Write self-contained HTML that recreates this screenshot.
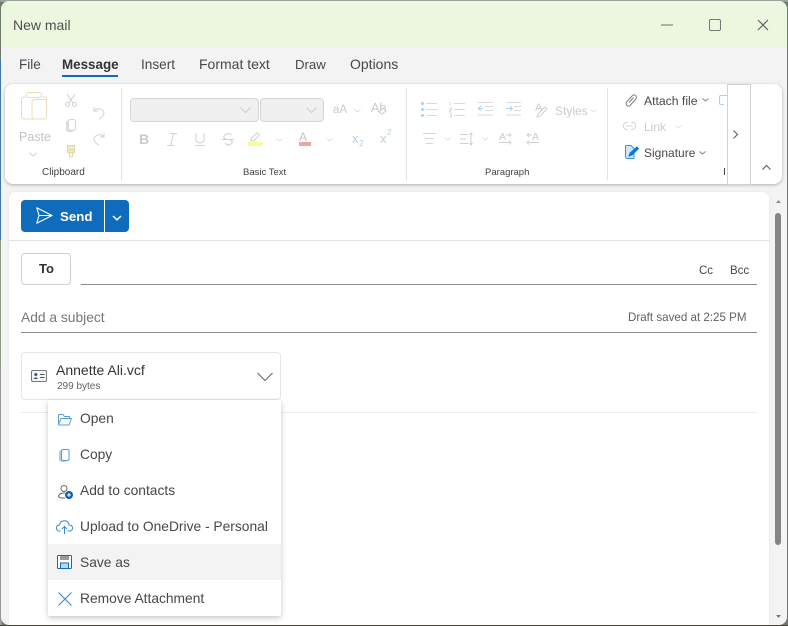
<!DOCTYPE html>
<html><head><meta charset="utf-8">
<style>
html,body{margin:0;padding:0;width:788px;height:626px;overflow:hidden;background:#6b7a6a;font-family:"Liberation Sans",sans-serif;}
#w{position:absolute;left:1px;top:1px;width:786px;height:624px;background:#f3f3f3;border-radius:8px;overflow:hidden;}
.a{position:absolute;}
.t{position:absolute;white-space:nowrap;line-height:16px;color:#484848;font-size:14px;}
svg{position:absolute;overflow:visible;fill:none;}
</style></head><body>
<div class="a" style="left:0;top:0;width:788px;height:2px;background:#9aa3a3"></div>
<div class="a" style="left:0;top:60px;width:2px;height:180px;background:#3f78a8"></div>
<div class="a" style="left:0;top:240px;width:2px;height:130px;background:#8a9a80"></div>
<div class="a" style="left:0;top:370px;width:2px;height:256px;background:#9a9a9a"></div>
<div class="a" style="left:0;top:625px;width:788px;height:1px;background:#4a4238"></div>
<div id="w"></div>
<div class="a" style="left:1px;top:1px;width:786px;height:47px;background:#edf7e0;border-radius:8px 8px 0 0"></div>
<div class="t" style="left:13px;top:17px;color:#505050">New mail</div>
<div class="a" style="left:661px;top:24px;width:12px;height:2px;background:#b0b2aa"></div>
<div class="a" style="left:709px;top:19px;width:10px;height:10px;border:1px solid #777;border-radius:2px"></div>
<svg style="left:758px;top:20px" width="10" height="10"><path d="M0 0L10 10M10 0L0 10" stroke="#555" stroke-width="1"/></svg>

<div class="t" style="left:19px;top:57px;font-size:13.5px">File</div>
<div class="t" style="left:62px;top:57px;font-weight:bold;color:#333;font-size:13.4px">Message</div>
<div class="a" style="left:62px;top:75px;width:56px;height:2px;background:#0f6cbd"></div>
<div class="t" style="left:141px;top:57px;font-size:13.6px">Insert</div>
<div class="t" style="left:199px;top:56px">Format text</div>
<div class="t" style="left:295px;top:57px;font-size:13.2px">Draw</div>
<div class="t" style="left:350px;top:56px">Options</div>

<!-- ribbon -->
<div class="a" style="left:5px;top:84px;width:777px;height:100px;background:#fff;border-radius:8px;box-shadow:0 1px 3px rgba(0,0,0,.28)"></div>
<div class="a" style="left:121px;top:88px;width:1px;height:92px;background:#e3e3e3"></div>
<div class="a" style="left:406px;top:88px;width:1px;height:92px;background:#e3e3e3"></div>
<div class="a" style="left:607px;top:88px;width:1px;height:92px;background:#e3e3e3"></div>

<!-- clipboard -->
<svg style="left:21px;top:92px" width="26" height="28"><path d="M5 5H3.5Q.5 5 .5 8V24Q.5 27 3.5 27H23Q25.500 27 25.500 24V8Q25.500 5 23 5H21" stroke="#e9dcbc" stroke-width="1"/><rect x="5.500" y=".5" width="15" height="5" rx="2" stroke="#e9dcbc" fill="#fff"/><rect x="11" y="7.500" width="14.500" height="19.500" rx="2.500" stroke="#e9dcbc" fill="#fff"/></svg>
<div class="t" style="left:19px;top:129px;font-size:12.5px;color:#c4c4c4">Paste</div>
<svg style="left:29px;top:152px" width="8" height="5"><path d="M.5.5L4 4L7.500.5" stroke="#d2d2d2"/></svg>
<div class="t" style="left:42px;top:165px;font-size:10px;color:#424242">Clipboard</div>
<svg style="left:65px;top:94px" width="12" height="13"><path d="M2 0L8 9M10 0L4 9" stroke="#cfcfcf"/><circle cx="2.500" cy="10.500" r="2" stroke="#cfcfcf"/><circle cx="9.500" cy="10.500" r="2" stroke="#cfcfcf"/></svg>
<svg style="left:66px;top:119px" width="10" height="13"><rect x=".5" y="2" width="7" height="10.500" rx="2" fill="#e2e2e2" stroke="#d6d6d6"/><rect x="2.500" y=".5" width="7" height="10.500" rx="1.500" fill="#fff" stroke="#d6d6d6"/></svg>
<svg style="left:93px;top:106px" width="12" height="13"><path d="M1 1V5H5M1 5C4 1 11 3 11 7C11 10 8 12 6 13" stroke="#d2d2d2"/></svg>
<svg style="left:93px;top:132px" width="12" height="13"><path d="M11 1V5H7M11 5C8 1 1 3 1 7C1 10 4 12 6 13" stroke="#d2d2d2"/></svg>
<svg style="left:67px;top:145px" width="8" height="13"><rect x=".5" y=".5" width="7" height="7" fill="#f3e8c8" stroke="#e6d5a6"/><path d="M.5 5H7.500M2.500 8V11.500Q4 13 5.500 11.500V8" stroke="#e6d5a6"/></svg>

<!-- basic text -->
<div class="a" style="left:130px;top:98px;width:127px;height:22px;background:#f0f0f0;border:1px solid #d6d6d6;border-radius:4px"></div>
<div class="a" style="left:260px;top:98px;width:62px;height:22px;background:#f0f0f0;border:1px solid #d6d6d6;border-radius:4px"></div>
<svg style="left:240px;top:107px" width="11" height="6"><path d="M.5.5L5.500 5.500L10.500.5" stroke="#cdcdcd"/></svg>
<svg style="left:306px;top:107px" width="11" height="6"><path d="M.5.5L5.500 5.500L10.500.5" stroke="#cdcdcd"/></svg>
<div class="t" style="left:333px;top:102px;font-size:11.5px;color:#cbcbcb">aA</div>
<svg style="left:354px;top:109px" width="7" height="4"><path d="M.5.5L3.500 3L6.500.5" stroke="#dedede"/></svg>
<div class="t" style="left:371px;top:100px;font-size:12.5px;color:#cbcbcb">Ab</div>
<svg style="left:378px;top:107px" width="8" height="8"><path d="M1 5L5 1L8 4L4 7Z" stroke="#cbcbcb" fill="#fff"/></svg>
<div class="t" style="left:139px;top:131px;font-size:14px;font-weight:bold;color:#cbcbcb">B</div>
<svg style="left:167px;top:133px" width="10" height="13"><path d="M3 .5H10M0 12.500H7M6.500.5L3.500 12.500" stroke="#d0d0d0"/></svg>
<svg style="left:195px;top:133px" width="10" height="13"><path d="M1 0V6.500Q1 10 5 10T9 6.500V0M0 12.500H10" stroke="#d0d0d0"/></svg>
<svg style="left:222px;top:133px" width="12" height="13"><path d="M0 6.500H12M9.500 2Q6 -1 3 2T4 6M3 10Q6 13.500 9 11T8 7" stroke="#d0d0d0"/></svg>
<svg style="left:248px;top:132px" width="15" height="14"><path d="M3 9L3.500 6L9 .8L11.500 3L6 8.500Z" stroke="#cfcfcf"/><rect y="10" width="14.500" height="4" fill="#fdf99b"/></svg>
<svg style="left:276px;top:138px" width="7" height="4"><path d="M.5.5L3.500 3L6.500.5" stroke="#e2e2e2"/></svg>
<div class="t" style="left:299px;top:129px;font-size:12px;color:#c6c6c6">A</div>
<div class="a" style="left:299px;top:142px;width:12px;height:4px;background:#eaa8a3"></div>
<svg style="left:326px;top:138px" width="7" height="4"><path d="M.5.5L3.500 3L6.500.5" stroke="#e2e2e2"/></svg>
<div class="t" style="left:352px;top:131px;font-size:13px;color:#cbcbcb">x</div>
<div class="t" style="left:359px;top:136px;font-size:8px;color:#a8d2f0">2</div>
<div class="t" style="left:380px;top:131px;font-size:13px;color:#cbcbcb">x</div>
<div class="t" style="left:387px;top:125px;font-size:8px;color:#a8d2f0">2</div>
<div class="t" style="left:243px;top:165px;font-size:9.5px;color:#424242">Basic Text</div>

<!-- paragraph -->
<svg style="left:421px;top:102px" width="16" height="15"><path d="M5 1.500H16M5 7.500H16M5 13.500H16" stroke="#dadada"/><circle cx="1.500" cy="1.500" r="1.500" fill="#a8d2f0"/><circle cx="1.500" cy="7.500" r="1.500" fill="#a8d2f0"/><circle cx="1.500" cy="13.500" r="1.500" fill="#a8d2f0"/></svg>
<svg style="left:449px;top:102px" width="16" height="15"><path d="M5 1.500H16M5 7.500H16M5 13.500H16" stroke="#dadada"/><path d="M1 0V3M.5 6H2.500V8H.5V10H2.500M.5 12H2.500V15H.5" stroke="#a8d2f0" stroke-width=".7"/></svg>
<svg style="left:478px;top:102px" width="15" height="15"><path d="M0 .5H15M7 4.500H15M7 8.500H15M0 13H15" stroke="#dadada"/><path d="M5 6.500H0M3 4L.5 6.500L3 9" stroke="#a8d2f0"/></svg>
<svg style="left:506px;top:102px" width="15" height="15"><path d="M0 .5H15M8 4.500H15M8 8.500H15M0 13H15" stroke="#dadada"/><path d="M0 6.500H6M4 4L6.500 6.500L4 9" stroke="#a8d2f0"/></svg>
<div class="t" style="left:535px;top:100px;font-size:11px;color:#cbcbcb">A</div>
<svg style="left:537px;top:106px" width="11" height="12"><path d="M0 11L1 8L8 1L10 3L3 10Z" stroke="#d0d0d0"/></svg>
<div class="t" style="left:555px;top:103px;font-size:12px;color:#cbcbcb">Styles</div>
<svg style="left:590px;top:109px" width="7" height="4"><path d="M.5.5L3.500 3L6.500.5" stroke="#e2e2e2"/></svg>
<svg style="left:423px;top:133px" width="13" height="11"><path d="M0 .5H13M2 5.500H11M3 10.500H10" stroke="#d6d6d6"/></svg>
<svg style="left:444px;top:137px" width="7" height="4"><path d="M.5.5L3.500 3L6.500.5" stroke="#e2e2e2"/></svg>
<svg style="left:460px;top:133px" width="13" height="12"><path d="M0 1.500H8M0 6H6M0 10.500H8M11 0V12M9.500 2L11 0L12.500 2M9.500 10L11 12L12.500 10" stroke="#d0d0d0"/></svg>
<svg style="left:482px;top:137px" width="7" height="4"><path d="M.5.5L3.500 3L6.500.5" stroke="#e2e2e2"/></svg>
<div class="t" style="left:499px;top:129px;font-size:10.500px;color:#cbcbcb">A</div>
<svg style="left:499px;top:132px" width="12" height="12"><path d="M7 3H12M10 1L12 3L10 5M0 10.500H12M10 8.500L12 10.500L10 12.500" stroke="#d0d0d0" stroke-width=".9"/></svg>
<div class="t" style="left:532px;top:129px;font-size:10.500px;color:#cbcbcb">A</div>
<svg style="left:527px;top:132px" width="12" height="12"><path d="M5 3H0M2 1L0 3L2 5M12 10.500H0M2 8.500L0 10.500L2 12.500" stroke="#d0d0d0" stroke-width=".9"/></svg>
<div class="t" style="left:485px;top:165px;font-size:9.5px;color:#424242">Paragraph</div>

<!-- insert -->
<svg style="left:625px;top:94px" width="12" height="13"><path d="M1.500 8L7.500 1.500Q9 .2 10.500 1.500T11 5L5 11.500Q3.500 12.800 2 11.500T1.500 8ZM4 8.500L8.500 3.500" stroke="#808080"/></svg>
<div class="t" style="left:644px;top:93px;font-size:12.2px">Attach file</div>
<svg style="left:702px;top:98px" width="7" height="4"><path d="M.5.5L3.500 3L6.500.5" stroke="#808080"/></svg>
<svg style="left:623px;top:122px" width="13" height="8"><path d="M5 .5H3.500Q.5.500.5 3.800T3.500 7.500H5M8 .5H9.500Q12.500.5 12.500 3.800T9.500 7.500H8M3.500 4H9.500" stroke="#d4d4d4"/></svg>
<div class="t" style="left:644px;top:119px;font-size:12px;color:#cbcbcb">Link</div>
<svg style="left:675px;top:125px" width="7" height="4"><path d="M.5.5L3.500 3L6.500.5" stroke="#e2e2e2"/></svg>
<svg style="left:625px;top:145px" width="14" height="14"><path d="M1 .5H6L9 3.500V13.500H2.500Q.5 13.500.5 11.500V1Z" fill="#cfe6f8" stroke="#3b93dc"/><path d="M4 11L5 8L12 2L13.500 3.500L7 10Z" fill="#0f78d4" stroke="#0f78d4"/></svg>
<div class="t" style="left:644px;top:145px;font-size:12px">Signature</div>
<svg style="left:699px;top:151px" width="7" height="4"><path d="M.5.5L3.500 3L6.500.5" stroke="#808080"/></svg>
<svg style="left:719px;top:95px" width="9" height="12"><path d="M9 .5H2Q.5.5.5 2V8Q.5 9.500 2 9.500H5" stroke="#a8d2f0"/></svg>
<div class="t" style="left:723px;top:164px;font-size:10.500px;color:#424242">I</div>
<div class="a" style="left:727px;top:84px;width:22px;height:99px;background:#fff;border:1px solid #d2d2d2;border-top-color:#d2d2d2"></div>
<svg style="left:733px;top:130px" width="5" height="9"><path d="M.5.5L4.500 4.500L.5 8.500" stroke="#555"/></svg>
<svg style="left:762px;top:165px" width="9" height="5"><path d="M.5 4.500L4.500.5L8.500 4.500" stroke="#555"/></svg>

<!-- main -->
<div class="a" style="left:9px;top:192px;width:760px;height:433px;background:#fff;border-radius:6px 6px 0 0;box-shadow:0 0 1px rgba(0,0,0,.15)"></div>
<div class="a" style="left:21px;top:200px;width:83px;height:32px;background:#0f6cbd;border-radius:4px 0 0 4px"></div>
<div class="a" style="left:105px;top:200px;width:24px;height:32px;background:#0f6cbd;border-radius:0 4px 4px 0"></div>
<svg style="left:36px;top:207px" width="17" height="17"><path d="M.8 .8L16 8.500L.8 16.200L3 8.500ZM3 8.500H16" stroke="#fff" stroke-width="1.100" stroke-linejoin="round"/></svg>
<div class="t" style="left:60px;top:209px;font-size:13.3px;font-weight:bold;color:#fff">Send</div>
<svg style="left:112px;top:215px" width="10" height="6"><path d="M1 1L5 4.800L9 1" stroke="#fff" stroke-width="1.500"/></svg>
<div class="a" style="left:9px;top:240px;width:760px;height:1px;background:#e2e2e2"></div>
<div class="a" style="left:21px;top:253px;width:48px;height:30px;background:#fff;border:1px solid #d1d1d1;border-radius:4px"></div>
<div class="t" style="left:39px;top:261px;font-size:13px;font-weight:bold;color:#333">To</div>
<div class="a" style="left:81px;top:284px;width:676px;height:1px;background:#8a8a8a"></div>
<div class="t" style="left:699px;top:263px;font-size:11.5px">Cc</div>
<div class="t" style="left:730px;top:263px;font-size:11.5px">Bcc</div>
<div class="t" style="left:21px;top:310px;color:#777;font-size:13.8px">Add a subject</div>
<div class="a" style="left:21px;top:332px;width:736px;height:1px;background:#8a8a8a"></div>
<div class="t" style="left:628px;top:310px;font-size:11.6px;color:#616161">Draft saved at 2:25 PM</div>

<div class="a" style="left:21px;top:352px;width:258px;height:46px;background:#fff;border:1px solid #e6e6e6;border-radius:4px"></div>
<svg style="left:31px;top:370px" width="16" height="13"><rect x=".5" y=".5" width="15" height="11" rx="1.500" fill="#f4f4f4" stroke="#777"/><circle cx="4.800" cy="4.500" r="1.500" fill="#34558c"/><path d="M2.500 9Q4.800 5.500 7 9Z" fill="#34558c"/><path d="M9 4.500H13.500M9 7.500H13.500" stroke="#555"/></svg>
<div class="t" style="left:56px;top:362px;color:#333;font-size:14px">Annette Ali.vcf</div>
<div class="t" style="left:57px;top:379px;font-size:10px;color:#616161">299 bytes</div>
<svg style="left:257px;top:372px" width="16" height="10"><path d="M.5 1L8 8.500L15.500 1" stroke="#666" stroke-width="1.100"/></svg>
<div class="a" style="left:21px;top:412px;width:736px;height:1px;background:#ececec"></div>

<!-- menu -->
<div class="a" style="left:48px;top:400px;width:233px;height:216px;background:#fff;box-shadow:0 2px 6px rgba(0,0,0,.22);border-radius:0 0 2px 2px"></div>
<div class="a" style="left:48px;top:544px;width:233px;height:36px;background:#f3f3f3"></div>
<div class="t" style="left:80px;top:411px;font-size:13.8px">Open</div>
<div class="t" style="left:80px;top:447px;font-size:13.8px">Copy</div>
<div class="t" style="left:80px;top:483px;font-size:13.8px">Add to contacts</div>
<div class="t" style="left:80px;top:519px;font-size:13.8px">Upload to OneDrive - Personal</div>
<div class="t" style="left:80px;top:555px;font-size:13.8px">Save as</div>
<div class="t" style="left:80px;top:591px;font-size:13.8px">Remove Attachment</div>
<svg style="left:58px;top:414px" width="14" height="12"><path d="M.5 10V1.500Q.5.500 1.500.500H5L6.500 2.500H11.500V4.500M.5 10.500L3 4.500H13.500L11 11H1Z" stroke="#5a9bdb" fill="#fff" stroke-linejoin="round"/></svg>
<svg style="left:59px;top:449px" width="11" height="13"><rect x=".5" y="1.500" width="7" height="11" rx="2" fill="#a9cdf0" stroke="#a9cdf0"/><rect x="2.500" y=".5" width="7.500" height="11" rx="1.500" fill="#fff" stroke="#5a9bdb"/></svg>
<svg style="left:58px;top:485px" width="15" height="14"><circle cx="6" cy="3.500" r="3" stroke="#6a6a6a"/><path d="M.5 12Q.5 8 6 8H7" stroke="#6a6a6a" fill="none"/><path d="M.5 11Q1 13 4 13H7" stroke="#6a6a6a"/><circle cx="11" cy="10" r="4" fill="#0f5fae"/><path d="M9 10H13M11 8V12" stroke="#fff"/></svg>
<svg style="left:56px;top:520px" width="17" height="14"><path d="M4.500 11H3.500Q.5 11 .5 8T3.500 5Q4.500 .8 8.500 .8T13 5Q16.500 5 16.500 8T13.500 11H11.500" stroke="#3b8ad4"/><path d="M8.500 14V6.500M6 9L8.500 6.500L11 9" stroke="#3b8ad4"/></svg>
<svg style="left:57px;top:555px" width="15" height="14"><rect x=".5" y=".5" width="14" height="13" rx="1" stroke="#0f6cbd" fill="#fff"/><rect x="3" y="1" width="9" height="4" fill="#9a9a9a"/><rect x="3.500" y="8" width="8" height="5.500" stroke="#0f6cbd" fill="#bcd8f2"/></svg>
<svg style="left:58px;top:592px" width="14" height="14"><path d="M.5.5L13.500 13.500M13.500.5L.5 13.500" stroke="#3b8ad4" stroke-width="1.100"/></svg>

<!-- scrollbar -->
<svg style="left:775px;top:199px" width="7" height="5"><path d="M1 4H6L3.500 1Z" fill="#8a8a8a"/></svg>
<div class="a" style="left:775px;top:213px;width:6px;height:332px;background:#858585;border-radius:3px"></div>
<svg style="left:775px;top:614px" width="7" height="5"><path d="M1 1H6L3.500 4Z" fill="#777"/></svg>
</body></html>
